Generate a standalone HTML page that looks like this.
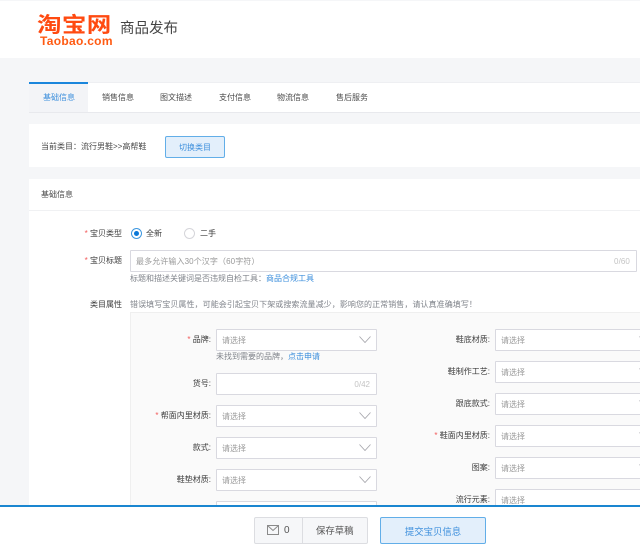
<!DOCTYPE html>
<html lang="zh">
<head>
<meta charset="utf-8">
<style>
*{box-sizing:border-box;margin:0;padding:0}
html,body{width:640px;height:550px;overflow:hidden;background:#f5f6f8}
body{position:relative;font-family:"Liberation Sans","Noto Sans CJK TC",sans-serif;font-size:8px;color:#4a4a4a;filter:blur(.3px)}
.a{position:absolute;white-space:nowrap}
.t{position:absolute;white-space:nowrap;line-height:12px;height:12px;margin-top:1px}
.r{text-align:right;color:#3c3c3c}
.s{color:#f25a5a}
.in{position:absolute;height:22px;background:#fff;border:1px solid #d9d9e0;border-radius:1px;color:#999;line-height:21px;padding-left:5px}
.ar{position:absolute;right:5px;top:6px}
.blue{color:#3d8fdc}
.g{color:#80848b}
</style>
</head>
<body>
<div class="a" style="left:0;top:1px;width:640px;height:57px;background:#fff"></div>
<div class="a" style="left:37px;top:8px;font:bold 24.5px/28px 'Noto Sans CJK SC',sans-serif;color:#ff4a10;letter-spacing:.4px;transform:scaleY(.85);transform-origin:0 100%">淘宝网</div>
<div class="a" style="left:40px;top:34px;font:bold 12px/14px 'Liberation Sans',sans-serif;color:#ff5a12;letter-spacing:.3px">Taobao.com</div>
<div class="a" style="left:120px;top:19px;font-size:14.5px;line-height:20px;color:#444">商品发布</div>

<div class="a" style="left:29px;top:82px;width:611px;height:31px;background:#fff;border-bottom:1px solid #e8e9ed;border-top:1px solid #eeeff2"></div>
<div class="a" style="left:29px;top:82px;width:59px;height:30px;background:#f3f4f7;border-top:2px solid #1a86dc"></div>
<div class="t blue" style="left:43px;top:91px">基础信息</div>
<div class="t" style="left:102px;top:91px">销售信息</div>
<div class="t" style="left:160px;top:91px">图文描述</div>
<div class="t" style="left:219px;top:91px">支付信息</div>
<div class="t" style="left:277px;top:91px">物流信息</div>
<div class="t" style="left:336px;top:91px">售后服务</div>

<div class="a" style="left:29px;top:124px;width:611px;height:43px;background:#fff"></div>
<div class="t" style="left:41px;top:140px">当前类目：流行男鞋&gt;&gt;高帮鞋</div>
<div class="a blue" style="left:165px;top:136px;width:60px;height:22px;background:#e3effb;border:1px solid #62aee8;border-radius:2px;text-align:center;line-height:21px">切换类目</div>

<div class="a" style="left:29px;top:179px;width:611px;height:330px;background:#fff"></div>
<div class="a" style="left:29px;top:210px;width:611px;height:1px;background:#f0f1f3"></div>
<div class="t" style="left:41px;top:188px">基础信息</div>

<div class="t r" style="right:518px;top:227px"><span class="s">* </span>宝贝类型</div>
<div class="a" style="left:131px;top:228px;width:11px;height:11px;border-radius:50%;border:1px solid #3d97e0;background:#fff"></div>
<div class="a" style="left:134px;top:231px;width:5px;height:5px;border-radius:50%;background:#0a78d8"></div>
<div class="t" style="left:146px;top:227px;color:#3c3c3c">全新</div>
<div class="a" style="left:184px;top:228px;width:11px;height:11px;border-radius:50%;border:1px solid #d5d5da;background:#fff"></div>
<div class="t" style="left:200px;top:227px;color:#3c3c3c">二手</div>

<div class="t r" style="right:518px;top:254px"><span class="s">* </span>宝贝标题</div>
<div class="in" style="left:130px;top:250px;width:507px;letter-spacing:.1px">最多允许输入30个汉字（60字符）<span class="a" style="right:6px;top:0;color:#c4c4c4">0/60</span></div>
<div class="t g" style="left:130px;top:272px">标题和描述关键词是否违规自检工具：<span class="blue">商品合规工具</span></div>
<div class="t r" style="right:518px;top:298px">类目属性</div>
<div class="t g" style="left:130px;top:298px;letter-spacing:.07px">错误填写宝贝属性，可能会引起宝贝下架或搜索流量减少，影响您的正常销售，请认真准确填写！</div>

<div class="a" style="left:130px;top:312px;width:510px;height:200px;background:#fafafa;border:1px solid #efefef;border-right:0"></div>

<!-- left column -->
<div class="t r" style="right:429px;top:333px"><span class="s">* </span>品牌:</div>
<div class="in" style="left:216px;top:329px;width:161px">请选择<svg class="ar" style="right:5px" width="12" height="7" viewBox="0 0 12 7"><path d="M.5.5l5.5 6 5.5-6" fill="none" stroke="#a8a8ae" stroke-width=".9"/></svg></div>
<div class="t g" style="left:216px;top:350px">未找到需要的品牌，<span class="blue">点击申请</span></div>

<div class="t r" style="right:429px;top:377px">货号:</div>
<div class="in" style="left:216px;top:373px;width:161px"><span class="a" style="right:6px;top:0;color:#c4c4c4">0/42</span></div>

<div class="t r" style="right:429px;top:409px"><span class="s">* </span>帮面内里材质:</div>
<div class="in" style="left:216px;top:405px;width:161px">请选择<svg class="ar" style="right:5px" width="12" height="7" viewBox="0 0 12 7"><path d="M.5.5l5.5 6 5.5-6" fill="none" stroke="#a8a8ae" stroke-width=".9"/></svg></div>

<div class="t r" style="right:429px;top:441px">款式:</div>
<div class="in" style="left:216px;top:437px;width:161px">请选择<svg class="ar" style="right:5px" width="12" height="7" viewBox="0 0 12 7"><path d="M.5.5l5.5 6 5.5-6" fill="none" stroke="#a8a8ae" stroke-width=".9"/></svg></div>

<div class="t r" style="right:429px;top:473px">鞋垫材质:</div>
<div class="in" style="left:216px;top:469px;width:161px">请选择<svg class="ar" style="right:5px" width="12" height="7" viewBox="0 0 12 7"><path d="M.5.5l5.5 6 5.5-6" fill="none" stroke="#a8a8ae" stroke-width=".9"/></svg></div>
<div class="in" style="left:216px;top:501px;width:161px"></div>

<!-- right column -->
<div class="t r" style="right:150px;top:333px">鞋底材质:</div>
<div class="in" style="left:495px;top:329px;width:162px">请选择<svg class="ar" width="12" height="7" viewBox="0 0 12 7"><path d="M.5.5l5.5 6 5.5-6" fill="none" stroke="#a8a8ae" stroke-width=".9"/></svg></div>
<div class="t r" style="right:150px;top:365px">鞋制作工艺:</div>
<div class="in" style="left:495px;top:361px;width:162px">请选择<svg class="ar" width="12" height="7" viewBox="0 0 12 7"><path d="M.5.5l5.5 6 5.5-6" fill="none" stroke="#a8a8ae" stroke-width=".9"/></svg></div>
<div class="t r" style="right:150px;top:397px">跟底款式:</div>
<div class="in" style="left:495px;top:393px;width:162px">请选择<svg class="ar" width="12" height="7" viewBox="0 0 12 7"><path d="M.5.5l5.5 6 5.5-6" fill="none" stroke="#a8a8ae" stroke-width=".9"/></svg></div>
<div class="t r" style="right:150px;top:429px"><span class="s">* </span>鞋面内里材质:</div>
<div class="in" style="left:495px;top:425px;width:162px">请选择<svg class="ar" width="12" height="7" viewBox="0 0 12 7"><path d="M.5.5l5.5 6 5.5-6" fill="none" stroke="#a8a8ae" stroke-width=".9"/></svg></div>
<div class="t r" style="right:150px;top:461px">图案:</div>
<div class="in" style="left:495px;top:457px;width:162px">请选择<svg class="ar" width="12" height="7" viewBox="0 0 12 7"><path d="M.5.5l5.5 6 5.5-6" fill="none" stroke="#a8a8ae" stroke-width=".9"/></svg></div>
<div class="t r" style="right:150px;top:493px">流行元素:</div>
<div class="in" style="left:495px;top:489px;width:162px">请选择</div>

<!-- footer -->
<div class="a" style="left:0;top:505px;width:640px;height:45px;background:#fff;border-top:2px solid #1a86d0"></div>
<div class="a" style="left:254px;top:517px;width:114px;height:27px;background:#f6f7f9;border:1px solid #dcdde1;border-radius:2px"></div>
<div class="a" style="left:302px;top:517px;width:1px;height:27px;background:#dcdde1"></div>
<svg class="a" style="left:267px;top:525px" width="12" height="10" viewBox="0 0 12 10"><path d="M.5.5h11v9H.5zM.5.5l5.5 5 5.5-5" fill="none" stroke="#8a8a8a"/></svg>
<div class="t" style="left:284px;top:524px;color:#555;font-size:10px">0</div>
<div class="t" style="left:316px;top:524px;font-size:9.4px;color:#555">保存草稿</div>
<div class="a blue" style="left:380px;top:517px;width:106px;height:27px;background:#e3effb;border:1px solid #62aee8;border-radius:2px;text-align:center;line-height:27px;font-size:9.4px">提交宝贝信息</div>
</body>
</html>
